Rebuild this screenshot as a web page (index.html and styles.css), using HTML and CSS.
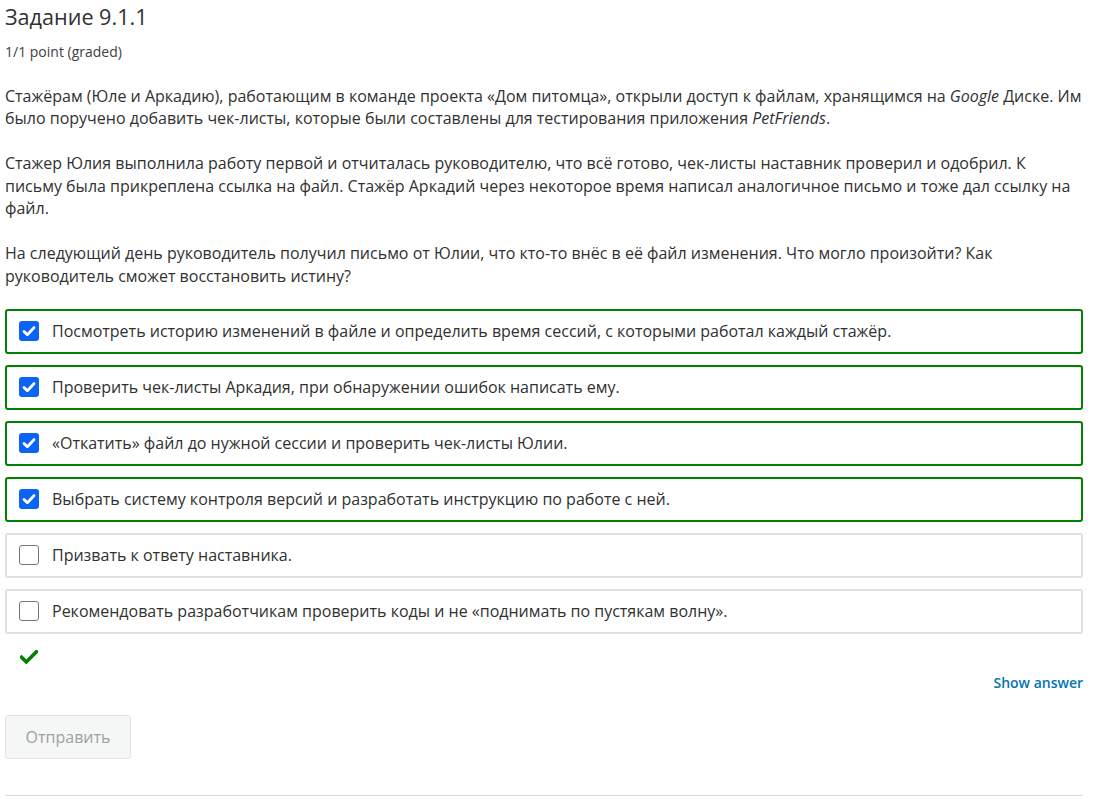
FILE: index.html
```html
<!DOCTYPE html>
<html lang="ru">
<head>
<meta charset="utf-8">
<title>Задание 9.1.1</title>
<link rel="stylesheet" href="styles.css">
</head>
<body>
<div class="problem">
  <h3 class="title">Задание 9.1.1</h3>
  <div class="points">1/1 point (graded)</div>
  <p class="para">Стажёрам (Юле и Аркадию), работающим в команде проекта «Дом питомца», открыли доступ к файлам, хранящимся на <em>Google</em> Диске. Им было поручено добавить чек-листы, которые были составлены для тестирования приложения <em>PetFriends</em>.</p>
  <p class="para">Стажер Юлия выполнила работу первой и отчиталась руководителю, что всё готово, чек-листы наставник проверил и одобрил. К письму была прикреплена ссылка на файл. Стажёр Аркадий через некоторое время написал аналогичное письмо и тоже дал ссылку на файл.</p>
  <p class="para">На следующий день руководитель получил письмо от Юлии, что кто-то внёс в её файл изменения. Что могло произойти? Как руководитель сможет восстановить истину?</p>

  <div class="choices">
    <label class="choice checked"><span class="box on"><svg viewBox="0 0 20 20" width="20" height="20"><rect width="20" height="20" rx="3" fill="#0b64f4"/><path d="M5 10.4 L8.4 13.8 L15 6.6" fill="none" stroke="#fff" stroke-width="2.8" stroke-linecap="round" stroke-linejoin="round"/></svg></span><span class="text">Посмотреть историю изменений в файле и определить время сессий, с которыми работал каждый стажёр.</span></label>
    <label class="choice checked"><span class="box on"><svg viewBox="0 0 20 20" width="20" height="20"><rect width="20" height="20" rx="3" fill="#0b64f4"/><path d="M5 10.4 L8.4 13.8 L15 6.6" fill="none" stroke="#fff" stroke-width="2.8" stroke-linecap="round" stroke-linejoin="round"/></svg></span><span class="text">Проверить чек-листы Аркадия, при обнаружении ошибок написать ему.</span></label>
    <label class="choice checked"><span class="box on"><svg viewBox="0 0 20 20" width="20" height="20"><rect width="20" height="20" rx="3" fill="#0b64f4"/><path d="M5 10.4 L8.4 13.8 L15 6.6" fill="none" stroke="#fff" stroke-width="2.8" stroke-linecap="round" stroke-linejoin="round"/></svg></span><span class="text">«Откатить» файл до нужной сессии и проверить чек-листы Юлии.</span></label>
    <label class="choice checked"><span class="box on"><svg viewBox="0 0 20 20" width="20" height="20"><rect width="20" height="20" rx="3" fill="#0b64f4"/><path d="M5 10.4 L8.4 13.8 L15 6.6" fill="none" stroke="#fff" stroke-width="2.8" stroke-linecap="round" stroke-linejoin="round"/></svg></span><span class="text">Выбрать систему контроля версий и разработать инструкцию по работе с ней.</span></label>
    <label class="choice"><span class="box off"></span><span class="text">Призвать к ответу наставника.</span></label>
    <label class="choice"><span class="box off"></span><span class="text">Рекомендовать разработчикам проверить коды и не «поднимать по пустякам волну».</span></label>
  </div>

  <div class="status"><svg viewBox="0 0 18 14" width="18" height="14"><path d="M1.6 7.2 L6.3 11.9 L16.4 1.8" fill="none" stroke="#008100" stroke-width="3.6" stroke-linecap="square"/></svg></div>

  <div class="actions-top"><a class="show-answer" href="#">Show answer</a></div>

  <div class="actions"><button class="submit" type="button" disabled>Отправить</button></div>

  <hr class="sep">
</div>
</body>
</html>
```
FILE: styles.css
```css
html, body {
  margin: 0;
  padding: 0;
  background: #fff;
}
body {
  font-family: "Open Sans", "Noto Sans", sans-serif;
  color: #313131;
}
.problem {
  padding: 0 12px 0 5px;
}
.title {
  margin: 0;
  padding-top: 2px;
  font-size: 21.6px;
  font-weight: 400;
  line-height: 30px;
  color: #313131;
}
.points {
  margin-top: 10px;
  font-size: 14px;
  line-height: 20px;
  color: #414141;
}
.para {
  margin: 22.5px 0 0 0;
  font-size: 16px;
  line-height: 22.5px;
}
.para em {
  font-style: italic;
}
.choices {
  margin-top: 21.5px;
  display: flex;
  flex-direction: column;
  gap: 11px;
}
.choice {
  display: flex;
  align-items: center;
  box-sizing: border-box;
  height: 45px;
  border: 2px solid #e0e0e0;
  border-radius: 3px;
  padding: 0 12px;
  font-size: 16px;
  line-height: 23px;
}
.choice.checked {
  border-color: #008100;
}
.box {
  flex: none;
  width: 20px;
  height: 20px;
  margin-right: 13px;
  display: block;
  box-sizing: border-box;
}
.box svg {
  display: block;
}
.box.off {
  border: 1px solid #767676;
  border-radius: 3px;
  background: #fff;
}
.status {
  margin-top: 16px;
  padding-left: 15px;
  height: 14px;
}
.status svg {
  display: block;
}
.actions-top {
  margin-top: 9px;
  display: flex;
  justify-content: flex-end;
}
.show-answer {
  font-size: 14px;
  font-weight: 600;
  color: #0075b4;
  text-decoration: none;
  line-height: 20px;
}
.actions {
  margin-top: 22px;
}
.submit {
  font-family: "Open Sans", "Noto Sans", sans-serif;
  font-size: 16px;
  color: #a0a0a0;
  background: #f5f6f6;
  border: 1px solid #e2e2e2;
  border-radius: 3px;
  width: 126px;
  height: 44px;
  padding: 0;
}
.sep {
  margin: 36px 0 0 0;
  border: 0;
  border-top: 1px solid #dddddd;
}
```
